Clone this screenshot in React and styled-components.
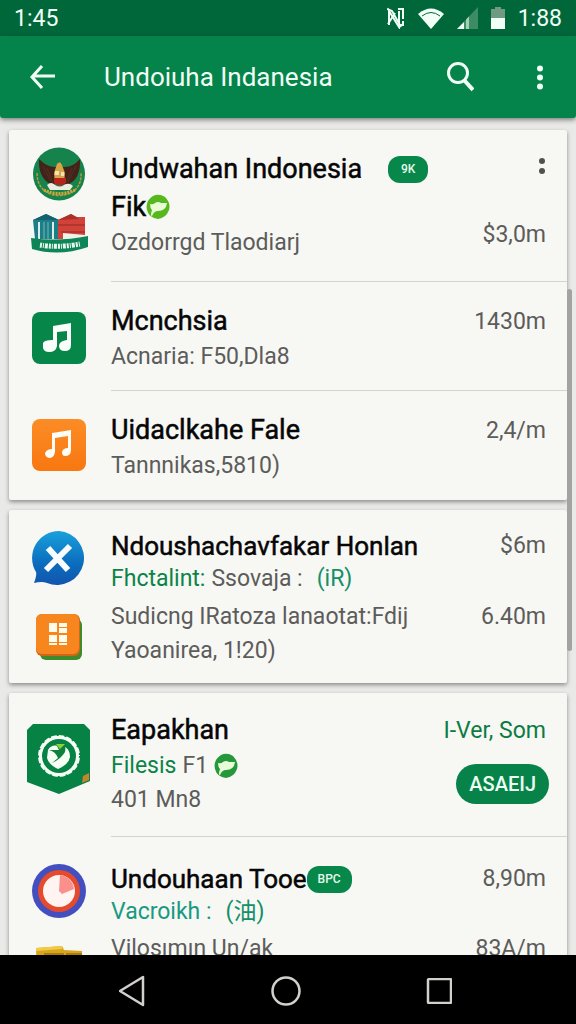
import styled, { createGlobalStyle } from "styled-components";

const GlobalStyle = createGlobalStyle`
    body {
        margin: 0;
        background: #000;
        font-family: Roboto, "Noto Sans CJK SC", sans-serif;
    }
`;

const Screen = styled.div`
    display: flex;
    flex-direction: column;
    height: 100vh;
    background: #E9E9E8;
    overflow: hidden;
`;

const StatusBar = styled.div`
    display: flex;
    flex-shrink: 0;
    justify-content: space-between;
    align-items: center;
    height: 36px;
    padding: 0 14px;
    background: #00673A;
    color: #F2FFF6;
    font-size: 23px;
`;

const StatusIcons = styled.div`
    display: flex;
    align-items: center;
    gap: 13px;
`;

const AppBar = styled.header`
    display: flex;
    flex-shrink: 0;
    align-items: center;
    height: 82px;
    padding: 0 12px 0 18px;
    box-sizing: border-box;
    background: #04844B;
    color: #F2FFF6;
    border-radius: 0 0 3px 3px;
    box-shadow: 0 2px 5px rgba(0, 0, 0, 0.45);
    z-index: 1;
`;

const AppTitle = styled.h1`
    flex: 1;
    margin: 0 0 0 38px;
    font-size: 26px;
    font-weight: 400;
    line-height: 38px;
`;

const IconButton = styled.button`
    display: flex;
    justify-content: center;
    align-items: center;
    width: 48px;
    height: 48px;
    padding: 0;
    border: none;
    background: none;
    color: inherit;
    cursor: pointer;
`;

const BarActions = styled.div`
    display: flex;
    gap: 32px;
`;

const ListArea = styled.main`
    position: relative;
    flex: 1;
    min-height: 0;
`;

const List = styled.div`
    display: flex;
    flex-direction: column;
    gap: 10px;
    height: 100%;
    padding: 12px 9px 0;
    box-sizing: border-box;
    overflow-y: auto;
    scrollbar-width: none;
`;

const ScrollThumb = styled.div`
    position: absolute;
    top: 171px;
    right: 4px;
    width: 5px;
    height: 362px;
    border-radius: 3px;
    background: #A3A3A1;
`;

const Card = styled.section`
    flex-shrink: 0;
    background: #F7F7F4;
    border-radius: 2px;
    box-shadow: 0 2px 4px rgba(0, 0, 0, 0.4);
`;

const Row = styled.article`
    display: flex;
    gap: 2px;
`;

const Icons = styled.div`
    display: flex;
    flex-direction: column;
    flex-shrink: 0;
    align-items: center;
    gap: 12px;
    width: 100px;
    padding-top: ${(props) => props.$top}px;
`;

const Body = styled.div`
    display: flex;
    flex: 1;
    justify-content: space-between;
    min-width: 0;
    padding: ${(props) => props.$pad};
    border-bottom: ${(props) => (props.$divider ? "1px solid #D3D3D0" : "none")};
`;

const Texts = styled.div`
    min-width: 0;
    white-space: nowrap;
`;

const Title = styled.h2`
    display: flex;
    align-items: center;
    margin: 0;
    color: #060606;
    font-size: ${(props) => (props.$tight ? "26px" : "27px")};
    font-weight: 400;
    line-height: ${(props) => (props.$tight ? "34px" : "38px")};
    -webkit-text-stroke: 0.5px #060606;
`;

const Sub = styled.p`
    display: flex;
    align-items: center;
    gap: 6px;
    margin: 0;
    color: ${(props) => props.$color || "#5C5C5A"};
    font-size: 23px;
    font-weight: 400;
    line-height: ${(props) => (props.$tight ? "32px" : "34px")};
`;

const Green = styled.span`
    color: #0B8348;
`;

const Script = styled.span`
    margin-left: 8px;
    color: #149069;
`;

const Pill = styled.span`
    display: inline-flex;
    justify-content: center;
    align-items: center;
    width: ${(props) => (props.$wide ? "45px" : "40px")};
    height: 27px;
    margin-left: ${(props) => (props.$wide ? "0" : "26px")};
    border-radius: 12px;
    background: #07874A;
    color: #E4FBEB;
    font-size: 12px;
    font-weight: 500;
    -webkit-text-stroke: 0;
`;

const Aside = styled.div`
    display: flex;
    flex-direction: column;
    flex-shrink: 0;
    align-items: flex-end;
    gap: ${(props) => props.$gap || 0}px;
    padding-right: 18px;
`;

const Value = styled.span`
    padding-right: 3px;
    color: ${(props) => props.$color || "#5C5C5A"};
    font-size: 23px;
    line-height: ${(props) => (props.$tight ? "34px" : "40px")};
`;

const MoreButton = styled(IconButton)`
    width: 14px;
    height: 32px;
    color: #50504E;
`;

const ActionButton = styled.button`
    height: 40px;
    padding: 0 13px;
    border: none;
    border-radius: 20px;
    background: #07834A;
    color: #EDFFF2;
    font-family: inherit;
    font-size: 20px;
    font-weight: 500;
    cursor: pointer;
`;

const NavBar = styled.nav`
    display: flex;
    flex-shrink: 0;
    justify-content: center;
    align-items: center;
    gap: 105px;
    height: 69px;
    padding: 3px 4px 0 0;
    box-sizing: border-box;
    background: #000;
    color: #D2D0CC;
    z-index: 1;
`;

const Leaf = ({ color = "#55B81C" }) => (
  <svg width="24" height="26" viewBox="0 0 24 26" aria-hidden="true">
    <path d="M7 2 Q13 -1 19 3 Q25 9 23 16 Q20 24 12 25 Q3 24 1 16 Q-1 7 7 2Z" fill={color} />
    <path d="M4 10 Q7 11 9 9 Q12 7 15 9 L21 9 Q20 17 12 17 Q8 17 6 22 Q4 22 6 16 Q4 14 4 10Z" fill="#EAFBD8" />
  </svg>
);

const Garuda = () => (
  <svg width="52" height="54" viewBox="0 0 52 54" aria-hidden="true">
    <ellipse cx="26" cy="27" rx="26" ry="26.500" fill="#15834B" />
    <path d="M4 26 Q4 40 15 46 Q26 51 38 46 Q49 39 48 26" fill="none" stroke="#B99A36" strokeWidth="1.500" strokeDasharray="3 1" />
    <path d="M6 12 Q15 21 23 20 L26 15 L30 20 Q39 21 47 12 Q48 31 36 37 L17 37 Q5 30 6 12Z" fill="#43221A" />
    <path d="M10 19 L18 35 M14 21 L20 36 M43 19 L35 35 M39 21 L33 36" stroke="#55301F" strokeWidth="1" />
    <path d="M24 17 Q27 13 29 18 L32 26 L31 37 L22 37 L21 26Z" fill="#D6A548" />
    <path d="M22 24 h4 v4 h-4z M28 25 h3 v4 h-3z" fill="#F3E2B0" />
    <path d="M21 31 h12 v5 q-6 5 -12 0z" fill="#B7241F" />
    <path d="M14 38 Q18 34 22 38 Q27 41 31 38 Q36 35 40 39 L37 43 L17 43Z" fill="#EDEDE2" />
    <path d="M11 43 Q26 50 42 43" fill="none" stroke="#D3A93C" strokeWidth="3" strokeDasharray="2 1" />
  </svg>
);

const Building = () => (
  <svg width="57" height="40" viewBox="0 0 57 40" aria-hidden="true">
    <path d="M2 7 L15 1 L28 7 V26 H4Z" fill="#1B7F87" />
    <path d="M2 7 L15 1 L28 7Z" fill="#15616F" />
    <path d="M8 9 V26 M22 9 V26" stroke="#DDEDEA" strokeWidth="2" />
    <path d="M13 9 V26 M17 9 V26" stroke="#7DB7B8" strokeWidth="1" />
    <path d="M27 7 L40 1 L46 4 L54 4 V26 H27Z" fill="#D24238" />
    <path d="M27 7 L40 1 L48 6Z" fill="#A83228" />
    <path d="M27 12 H54 M30 19 H54" stroke="#8E2A25" strokeWidth="1" />
    <path d="M32 20 L54 22 V27 H32Z" fill="#EFF2E8" />
    <path d="M0 25 Q28 29 57 23 V34 Q28 44 1 36Z" fill="#0E8556" />
    <path d="M9 32 Q28 35 49 31" fill="none" stroke="#EAF8EE" strokeWidth="5" strokeDasharray="2 1 1 1 3 1" />
  </svg>
);

const MusicGreen = () => (
  <svg width="54" height="52" viewBox="0 0 54 52" aria-hidden="true">
    <rect width="54" height="52" rx="8" fill="#07864A" />
    <path d="M21 14 L39 11 V33 Q39 39 33 39 Q27 39 27 34 Q27 29 35 28 V19 L25 20 V34 Q24 40 17 40 Q12 40 11 36 V31 Q12 28 21 28Z" fill="#FBFFF9" />
  </svg>
);

const MusicOrange = () => (
  <svg width="54" height="52" viewBox="0 0 54 52" aria-hidden="true">
    <defs>
      <linearGradient id="musicOrange" x1="0" y1="0" x2="0" y2="1">
        <stop offset="0" stopColor="#FC8C26" />
        <stop offset="1" stopColor="#F87710" />
      </linearGradient>
    </defs>
    <rect width="54" height="52" rx="8" fill="url(#musicOrange)" />
    <path d="M20 14 L39 11 V31 Q39 37 33 37 Q30 37 30 33 Q31 29 36 29 V17 L23 19 V33 Q22 39 17 39 Q13 38 13 34 Q15 30 20 30Z" fill="#FFFDF5" />
  </svg>
);

const Bubble = () => (
  <svg width="54" height="55" viewBox="0 0 54 55" aria-hidden="true">
    <defs>
      <linearGradient id="bubble" x1="0" y1="0" x2="0" y2="1">
        <stop offset="0" stopColor="#1AA0DC" />
        <stop offset="0.6" stopColor="#0B6DBD" />
        <stop offset="1" stopColor="#1255AE" />
      </linearGradient>
    </defs>
    <path d="M27 0 A27 27 0 1 1 15 52 Q10 50 2 52 Q5 44 4 41 A27 27 0 0 1 27 0Z" fill="url(#bubble)" />
    <path d="M16 17 L36 39 M38 15 L14 39" stroke="#FAFDFF" strokeWidth="6" />
  </svg>
);

const Grid = () => (
  <svg width="46" height="46" viewBox="0 0 46 46" aria-hidden="true">
    <rect x="4" y="5" width="42" height="41" rx="6" fill="#3D8B2C" />
    <rect x="0" y="0" width="44" height="42" rx="6" fill="#D26616" />
    <rect x="0" y="0" width="43" height="40" rx="6" fill="#F8861F" />
    <path d="M13 9h8v9h-8z M23 9h8v4h-8z M23 14h8v5h-8z M13 21h8v7h-8z M23 21h8v7h-8z M13 29h8v2h-8z M23 29h8v2h-8z" fill="#FFFBEA" />
  </svg>
);

const Shield = () => (
  <svg width="64" height="70" viewBox="0 0 64 70" aria-hidden="true">
    <path d="M6 0 H57 L63 6 V57 L32 70 L0 58 V6Z" fill="#078245" />
    <circle cx="32" cy="32" r="19" fill="none" stroke="#F5FFF4" strokeWidth="4" />
    <circle cx="32" cy="32" r="21" fill="none" stroke="#078245" strokeWidth="2" strokeDasharray="2 6" />
    <path d="M21 26 Q24 20 32 22 Q43 22 43 33 Q42 40 31 45 Q22 41 20 34Z" fill="#F5FFF4" />
    <path d="M22 26 Q28 27 31 34 L25 39 Q34 35 38 28 Q40 22 34 20 L29 20 L32 26Z" fill="#0E7F3C" />
    <path d="M29 20 L38 20 L33 25Z" fill="#8CD23A" />
    <path d="M56 52 L62 49 V56 L55 59Z" fill="#C9822B" />
  </svg>
);

const PieIcon = () => (
  <svg width="54" height="55" viewBox="0 0 54 55" aria-hidden="true">
    <circle cx="27" cy="27" r="27" fill="#434FBF" />
    <circle cx="27" cy="27" r="21" fill="#E54A2C" />
    <circle cx="27" cy="27" r="16" fill="#FFF4F1" />
    <path d="M27 27 L28 11 A16 16 0 0 1 42 25 L30 30Z" fill="#FA8F8B" />
  </svg>
);

const Folder = () => (
  <svg width="46" height="36" viewBox="0 0 46 36" aria-hidden="true">
    <path d="M0 2 L26 0 L28 4 L46 5 V36 H1Z" fill="#D9A51C" />
    <path d="M0 2 L26 0 V3 L0 5Z" fill="#F0CB44" />
    <path d="M8 8 H28 M30 8 H46" stroke="#A87A10" strokeWidth="2" />
  </svg>
);

const VibrateOff = () => (
  <svg width="18" height="22" viewBox="0 0 18 22" fill="none" stroke="currentColor" aria-hidden="true">
    <path d="M2 18 V4 L12 20 V4" strokeWidth="2" />
    <path d="M0 2 L5 4 L14 20 M1 17 L8 6" strokeWidth="2" />
    <path d="M11 2 H16 V12 M16 14 V18 H13" strokeWidth="2" />
  </svg>
);

const Wifi = () => (
  <svg width="26" height="21" viewBox="0 0 26 21" aria-hidden="true">
    <path d="M0 6 Q13 -5 26 6 L13 21Z" fill="currentColor" />
    <path d="M4 8 Q13 1 22 8" fill="none" stroke="#00673A" strokeWidth="1" />
  </svg>
);

const Signal = () => (
  <svg width="21" height="22" viewBox="0 0 21 22" aria-hidden="true">
    <path d="M21 0 V22 H0Z" fill="#3C8C66" />
    <path d="M7 15 V22 H0Z" fill="currentColor" />
    <path d="M9 12.500 L12 9.500 V22 H9Z" fill="#A9CDBB" />
  </svg>
);

const Battery = () => (
  <svg width="14" height="22" viewBox="0 0 14 22" aria-hidden="true">
    <path d="M4 0 H10 V2 H14 V12 H0 V2 H4Z" fill="#6F9A83" />
    <path d="M0 11 H14 V22 H0Z" fill="currentColor" />
  </svg>
);

const BackArrow = () => (
  <svg width="26" height="26" viewBox="0 0 26 26" fill="none" stroke="currentColor" strokeWidth="3" aria-hidden="true">
    <path d="M13 2 L3 13 L13 24 M3 12 H26" />
  </svg>
);

const Search = () => (
  <svg width="28" height="30" viewBox="0 0 28 30" fill="none" stroke="currentColor" strokeWidth="3" aria-hidden="true">
    <circle cx="12" cy="11" r="9.500" />
    <path d="M18 18 L27 28" strokeWidth="4" />
  </svg>
);

const Dots = ({ count, step = 9 }) => (
  <svg width="6" height={count * step} viewBox={`0 0 6 ${count * step}`} fill="currentColor" aria-hidden="true">
    {Array.from({ length: count }, (_, i) => (
      <circle key={i} cx="3" cy={i * step + step / 2} r="3" />
    ))}
  </svg>
);

export default function App() {
  return (
    <Screen>
      <GlobalStyle />
      <StatusBar>
        <span>1:45</span>
        <StatusIcons>
          <VibrateOff />
          <Wifi />
          <Signal />
          <Battery />
          <span>1:88</span>
        </StatusIcons>
      </StatusBar>
      <AppBar>
        <IconButton type="button" aria-label="Back"><BackArrow /></IconButton>
        <AppTitle>Undoiuha Indanesia</AppTitle>
        <BarActions>
          <IconButton type="button" aria-label="Search"><Search /></IconButton>
          <IconButton type="button" aria-label="More"><Dots count={3} /></IconButton>
        </BarActions>
      </AppBar>
      <ListArea>
        <List>
          <Card>
            <Row>
              <Icons $top={17}>
                <Garuda />
                <Building />
              </Icons>
              <Body $pad="20px 0 21px" $divider>
                <Texts>
                  <Title>Undwahan Indonesia <Pill>9K</Pill></Title>
                  <Title>Fik<Leaf /></Title>
                  <Sub>Ozdorrgd Tlaodiarj</Sub>
                </Texts>
                <Aside $gap={33}>
                  <MoreButton type="button" aria-label="Item options"><Dots count={2} step={10} /></MoreButton>
                  <Value>$3,0m</Value>
                </Aside>
              </Body>
            </Row>
            <Row>
              <Icons $top={30}><MusicGreen /></Icons>
              <Body $pad="20px 0 16px" $divider>
                <Texts>
                  <Title>Mcnchsia</Title>
                  <Sub>Acnaria: F50,Dla8</Sub>
                </Texts>
                <Aside><Value>1430m</Value></Aside>
              </Body>
            </Row>
            <Row>
              <Icons $top={28}><MusicOrange /></Icons>
              <Body $pad="20px 0 17px">
                <Texts>
                  <Title>Uidaclkahe Fale</Title>
                  <Sub>Tannnikas,5810)</Sub>
                </Texts>
                <Aside><Value>2,4/m</Value></Aside>
              </Body>
            </Row>
          </Card>

          <Card>
            <Row>
              <Icons $top={21}><Bubble /></Icons>
              <Body $pad="19px 0 5px">
                <Texts>
                  <Title $tight>Ndoushachavfakar Honlan</Title>
                  <Sub $tight><Green>Fhctalint:</Green> Ssovaja : <Script>(iR)</Script></Sub>
                </Texts>
                <Aside><Value $tight>$6m</Value></Aside>
              </Body>
            </Row>
            <Row>
              <Icons $top={14}><Grid /></Icons>
              <Body $pad="0 0 15px">
                <Texts>
                  <Sub>Sudicng IRatoza lanaotat:Fdij</Sub>
                  <Sub>Yaoanirea, 1!20)</Sub>
                </Texts>
                <Aside><Value $tight>6.40m</Value></Aside>
              </Body>
            </Row>
          </Card>

          <Card>
            <Row>
              <Icons $top={31}><Shield /></Icons>
              <Body $pad="18px 0 19px" $divider>
                <Texts>
                  <Title>Eapakhan</Title>
                  <Sub><Green>Filesis</Green> F1<Leaf color="#24983A" /></Sub>
                  <Sub>401 Mn8</Sub>
                </Texts>
                <Aside $gap={13}>
                  <Value $color="#0B7C42">I-Ver, Som</Value>
                  <ActionButton type="button">ASAEIJ</ActionButton>
                </Aside>
              </Body>
            </Row>
            <Row>
              <Icons $top={27}><PieIcon /></Icons>
              <Body $pad="25px 0 4px">
                <Texts>
                  <Title $tight>Undouhaan Tooe<Pill $wide>BPC</Pill></Title>
                  <Sub $tight $color="#189A82">Vacroikh : <Script>(油)</Script></Sub>
                </Texts>
                <Aside><Value $tight>8,90m</Value></Aside>
              </Body>
            </Row>
            <Row>
              <Icons $top={14}><Folder /></Icons>
              <Body $pad="0 0 15px">
                <Texts>
                  <Sub>Vilosımın Un/ak</Sub>
                </Texts>
                <Aside><Value $tight>83A/m</Value></Aside>
              </Body>
            </Row>
          </Card>
        </List>
        <ScrollThumb />
      </ListArea>
      <NavBar>
        <IconButton type="button" aria-label="Back">
          <svg width="28" height="32" viewBox="0 0 28 32" fill="none" stroke="currentColor" strokeWidth="2.500" strokeLinejoin="round">
            <path d="M1 16 L24 2 V30Z" />
          </svg>
        </IconButton>
        <IconButton type="button" aria-label="Home">
          <svg width="30" height="30" viewBox="0 0 30 30" fill="none" stroke="currentColor" strokeWidth="2.500">
            <circle cx="15" cy="15" r="13.500" />
          </svg>
        </IconButton>
        <IconButton type="button" aria-label="Recent apps">
          <svg width="26" height="26" viewBox="0 0 26 26" fill="none" stroke="currentColor" strokeWidth="2.500">
            <rect x="2" y="1" width="23" height="24" rx="1" />
          </svg>
        </IconButton>
      </NavBar>
    </Screen>
  );
}
